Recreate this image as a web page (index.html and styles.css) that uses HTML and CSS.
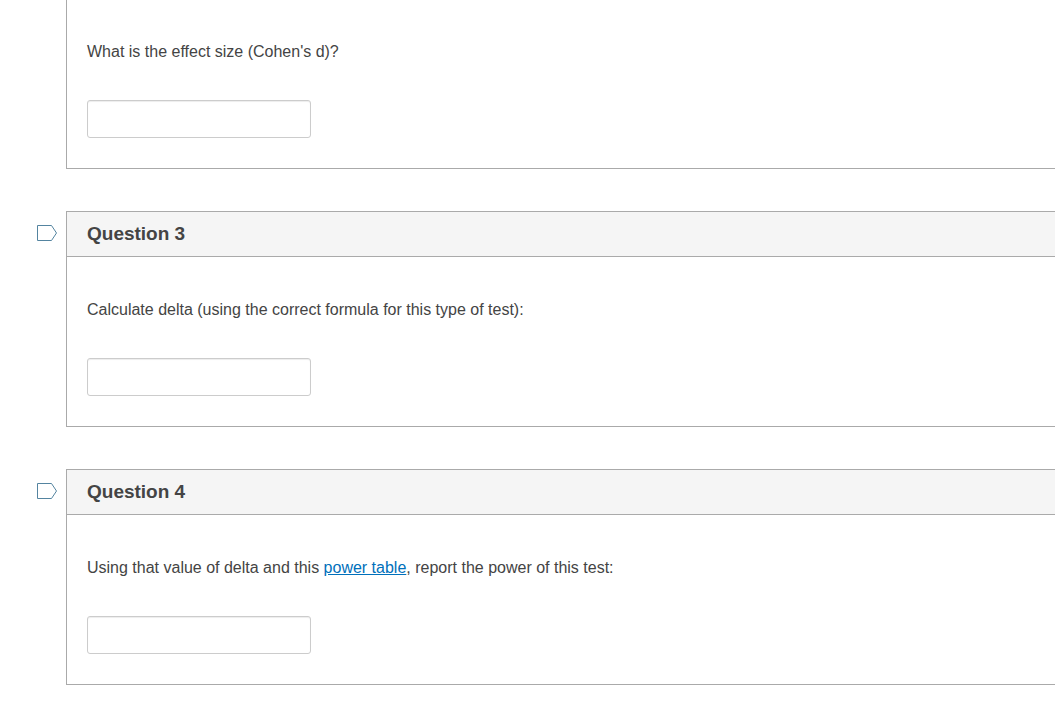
FILE: index.html
```
<!DOCTYPE html>
<html lang="en">
<head>
<meta charset="UTF-8">
<meta name="viewport" content="width=device-width, initial-scale=1.0">
<title>Quiz</title>
<link rel="stylesheet" href="styles.css">
</head>
<body>

<form class="quiz">
  <div class="question-row">
    <div class="flag-column"></div>
    <section class="question continued">
      <div class="question-body">
        <label class="question-text" for="answer-2">What is the effect size (Cohen's d)?</label>
        <input class="answer" type="text" id="answer-2">
      </div>
    </section>
  </div>

  <div class="question-row">
    <div class="flag-column">
      <button class="flag" type="button" aria-label="Flag question 3">
        <svg width="20" height="17" viewBox="0 0 20 17" fill="none" stroke="currentColor"><path d="M0.5 0.5H14.5L19.5 8L14.5 15.5H0.5Z"/></svg>
      </button>
    </div>
    <section class="question">
      <h2 class="question-header">Question 3</h2>
      <div class="question-body">
        <label class="question-text" for="answer-3">Calculate delta (using the correct formula for this type of test):</label>
        <input class="answer" type="text" id="answer-3">
      </div>
    </section>
  </div>

  <div class="question-row">
    <div class="flag-column">
      <button class="flag" type="button" aria-label="Flag question 4">
        <svg width="20" height="17" viewBox="0 0 20 17" fill="none" stroke="currentColor"><path d="M0.5 0.5H14.5L19.5 8L14.5 15.5H0.5Z"/></svg>
      </button>
    </div>
    <section class="question">
      <h2 class="question-header">Question 4</h2>
      <div class="question-body">
        <label class="question-text" for="answer-4">Using that value of delta and this <a href="#">power table</a>, report the power of this test:</label>
        <input class="answer" type="text" id="answer-4">
      </div>
    </section>
  </div>
</form>

</body>
</html>
```
FILE: styles.css
```
body {
  margin: 0;
  background-color: #fff;
  color: #444;
  font-family: "Liberation Sans", Arial, sans-serif;
  font-size: 16px;
  line-height: 24px;
}
.quiz {
  display: flex;
  flex-direction: column;
  gap: 42px;
  padding: 0 0 32px 37px;
}
.question-row {
  display: flex;
}
.flag-column {
  flex: 0 0 29px;
}
.flag {
  display: block;
  margin-top: 14px;
  padding: 0;
  border: none;
  background: none;
  color: #5484a0;
  cursor: pointer;
}
.flag svg {
  display: block;
}
.question {
  flex: 1;
  border: 1px solid #aaa;
  border-right: none;
}
.question.continued {
  border-top: none;
}
.question-header {
  margin: 0;
  padding: 10px 20px;
  border-bottom: 1px solid #aaa;
  background-color: #f5f5f5;
  font-size: 19px;
  line-height: 24px;
}
.question-body {
  display: flex;
  flex-direction: column;
  align-items: flex-start;
  gap: 36px;
  padding: 41px 20px 30px;
}
.continued .question-body {
  padding-top: 40px;
}
.question-text a {
  color: #0070bb;
}
.answer {
  box-sizing: border-box;
  width: 224px;
  height: 38px;
  padding: 8px;
  border: 1px solid #ccc;
  border-radius: 3px;
  box-shadow: inset 0 1px 1px rgba(0, 0, 0, 0.075);
  color: #444;
  font: inherit;
}
```
